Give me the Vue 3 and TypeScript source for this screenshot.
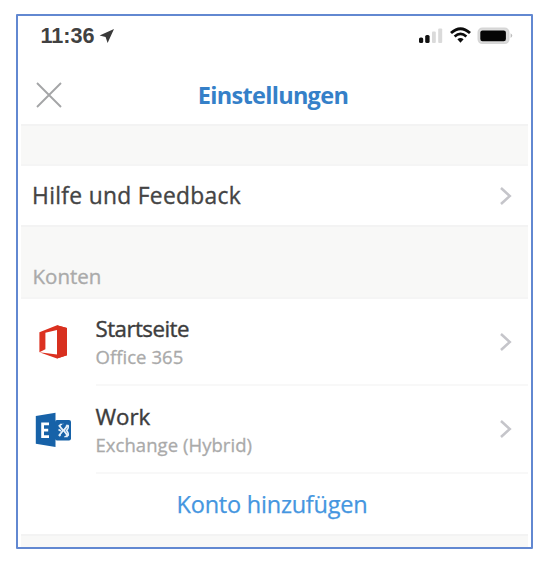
<script setup lang="ts">
interface Account {
  name: string
  kind: string
  icon: 'office' | 'exchange'
}

const accounts: Account[] = [
  { name: 'Startseite', kind: 'Office 365', icon: 'office' },
  { name: 'Work', kind: 'Exchange (Hybrid)', icon: 'exchange' },
]
</script>

<template>
  <main class="phone">
    <div class="status">
      <span class="time">11:36</span>
      <svg class="location" width="16" height="16" viewBox="0 0 16 16">
        <path d="M15 1 L.6 7.6 L6.6 8.9 L8.6 15 Z" fill="#3a3a3a" />
      </svg>
      <svg class="indicators" width="96" height="20" viewBox="0 0 96 20">
        <rect x="1" y="11.5" width="4.2" height="5.5" rx="1.6" fill="#111" />
        <rect x="7.2" y="9" width="4.4" height="8" rx="1.6" fill="#111" />
        <rect x="14" y="5.5" width="3.8" height="11.5" rx="1" fill="#dadada" />
        <rect x="20.2" y="2.5" width="4" height="14.5" rx="1" fill="#dadada" />
        <g fill="none" stroke="#0b0b0b">
          <path d="M33 7 Q42.5 -1.6 52 7" stroke-width="2.9" />
          <path d="M36.6 10.5 Q42.5 5.3 48.4 10.5" stroke-width="2.6" />
        </g>
        <path d="M39.4 13.3 Q42.5 10.9 45.6 13.3 L42.5 16.8 Z" fill="#0b0b0b" />
        <rect x="60.3" y="2.3" width="30.4" height="15" rx="4" fill="#dcdcdc" stroke="#d6d6d6" stroke-width="1.6" />
        <rect x="62.3" y="4.5" width="25.6" height="10.8" rx="2.2" fill="#050505" />
        <path d="M92.6 7.3 Q96 9.6 92.6 12 Z" fill="#bdbdbd" />
      </svg>
    </div>

    <header class="header">
      <svg class="close" width="26" height="26" viewBox="0 0 26 26">
        <path d="M1 1 L25 25 M25 1 L1 25" stroke="#a4a5a7" stroke-width="1.9" />
      </svg>
      <h1 class="title">Einstellungen</h1>
    </header>

    <div class="band gap"></div>

    <div class="help">
      <span class="help-label">Hilfe und Feedback</span>
      <svg class="chevron" width="14" height="20" viewBox="0 0 14 20">
        <path d="M2 2 L10.8 10 L2 18" fill="none" stroke="#c5c5ca" stroke-width="2.5" />
      </svg>
    </div>

    <div class="band section"><h2 class="section-label">Konten</h2></div>

    <div v-for="account in accounts" :key="account.name" class="account" :class="account.icon">
      <svg v-if="account.icon === 'office'" class="logo" width="38" height="36" viewBox="0 0 38 36">
        <path d="M4.4 8.3 L22 1.2 L32 4 V31.2 L22 34.5 L4.4 28.3 L22 30.4 V6 L10.4 8.8 V25.2 L4.4 28.3 Z" fill="#dc3120" />
        <path d="M22 1.2 L32 4 V31.2 L22 34.5 Z" fill="#d8301f" />
      </svg>
      <svg v-else class="logo" width="38" height="36" viewBox="0 0 38 36">
        <rect x="20" y="8" width="16" height="20.5" rx="2" fill="#1762a8" />
        <path d="M24 13 L32.8 24 M32.8 13 L24 24" stroke="#e6f1fa" stroke-width="2.2" />
        <path d="M25 12.5 H29 M29 24.5 H32.8 M33 13 Q34 16 31.5 18.5 Q34 21 33 24 M23.5 17.5 L26 19" fill="none" stroke="#e6f1fa" stroke-width="1.6" />
        <path d="M28 11.2 L30.7 14.3 L28.4 17.2 L26 14.4 Z M28.4 19.6 L30.8 22.7 L28.3 25.7 L25.8 22.8 Z" fill="#1762a8" />
        <path d="M.8 4 L20.5 .8 V35 L.8 31.8 Z" fill="#1762a8" />
        <path d="M14 11.8 H7.6 V24.6 H14 M7.6 18.1 H13.2" fill="none" stroke="#fff" stroke-width="2.8" />
      </svg>
      <div class="details">
        <div class="text">
          <span class="name">{{ account.name }}</span>
          <span class="kind">{{ account.kind }}</span>
        </div>
        <svg class="chevron" width="14" height="20" viewBox="0 0 14 20">
          <path d="M2 2 L10.8 10 L2 18" fill="none" stroke="#c5c5ca" stroke-width="2.5" />
        </svg>
      </div>
    </div>

    <button class="add" type="button">Konto hinzufügen</button>
    <div class="band bottom"></div>
  </main>
</template>

<style>
body { background: #fff; }
</style>

<style scoped>
.phone {
  box-sizing: border-box;
  width: 517px;
  height: 535px;
  margin: 14px 0 0 16px;
  padding: 0 2px;
  border: 2px solid #6288d1;
  border-radius: 1px;
  background: #fff;
  font-family: "Open Sans", "Noto Sans", sans-serif;
  display: flex;
  flex-direction: column;
}
.status {
  height: 40px;
  flex: none;
  display: flex;
  align-items: center;
  padding: 0 15px 0 20.5px;
}
.time {
  font: bold 21.6px/24px "Liberation Sans", sans-serif;
  color: #414141;
  width: 53px;
}
.location { margin-left: 5px; }
.indicators { margin-left: auto; }
.header {
  height: 68px;
  flex: none;
  display: grid;
  grid-template-columns: 26px 1fr 26px;
  align-items: center;
  padding: 0 19px 0 16px;
}
.close { margin-top: 10px; }
.title {
  margin: 9px 0 0;
  text-align: center;
  font-size: 23.5px;
  line-height: 32px;
  font-weight: 700;
  letter-spacing: -.7px;
  color: #3580c8;
}
.band {
  flex: none;
  box-sizing: border-box;
  margin: 0 1px;
  background: #f8f8f7;
  border-top: 2px solid #f3f3f3;
  border-bottom: 2px solid #f5f5f5;
}
.gap { height: 42px; }
.help {
  height: 59px;
  flex: none;
  display: flex;
  align-items: center;
  justify-content: space-between;
  padding: 0 16px 0 12px;
}
.help-label {
  font-size: 22.8px;
  line-height: 30px;
  letter-spacing: .32px;
  color: #444;
  -webkit-text-stroke: .35px #444;
}
.section { height: 74px; padding: 34px 0 0 11.5px; }
.section-label {
  margin: 0;
  font-size: 20.5px;
  line-height: 30px;
  font-weight: 400;
  color: #aaa;
  -webkit-text-stroke: .35px #aaa;
}
.account {
  display: flex;
  align-items: center;
  height: 88px;
  flex: none;
  padding-left: 15px;
}
.account.office { height: 87px; }
.logo { flex: none; margin-bottom: 2px; }
.exchange .logo { margin-bottom: 1px; }
.details {
  flex: 1;
  box-sizing: border-box;
  height: 100%;
  margin: 0 1px 0 22.5px;
  border-bottom: 2px solid #f8f8f8;
  display: flex;
  align-items: center;
  justify-content: space-between;
  padding-right: 15px;
}
.text { display: flex; flex-direction: column; padding-top: 1px; }
.name {
  font-size: 22.3px;
  line-height: 29px;
  color: #3d3d3d;
  -webkit-text-stroke: .4px #3d3d3d;
}
.office .name { letter-spacing: -.55px; }
.kind {
  font-size: 18.5px;
  line-height: 27px;
  color: #aaa;
  letter-spacing: .05px;
  -webkit-text-stroke: .3px #aaa;
}
.add {
  height: 60px;
  flex: none;
  border: 0;
  padding: 0 5px 0 0;
  background: transparent;
  color: #4596e0;
  font: 400 23.5px/30px "Open Sans", "Noto Sans", sans-serif;
  letter-spacing: -.22px;
  -webkit-text-stroke: .25px #4596e0;
}
.bottom { height: 13px; margin-top: auto; border-bottom: 0; }
</style>
